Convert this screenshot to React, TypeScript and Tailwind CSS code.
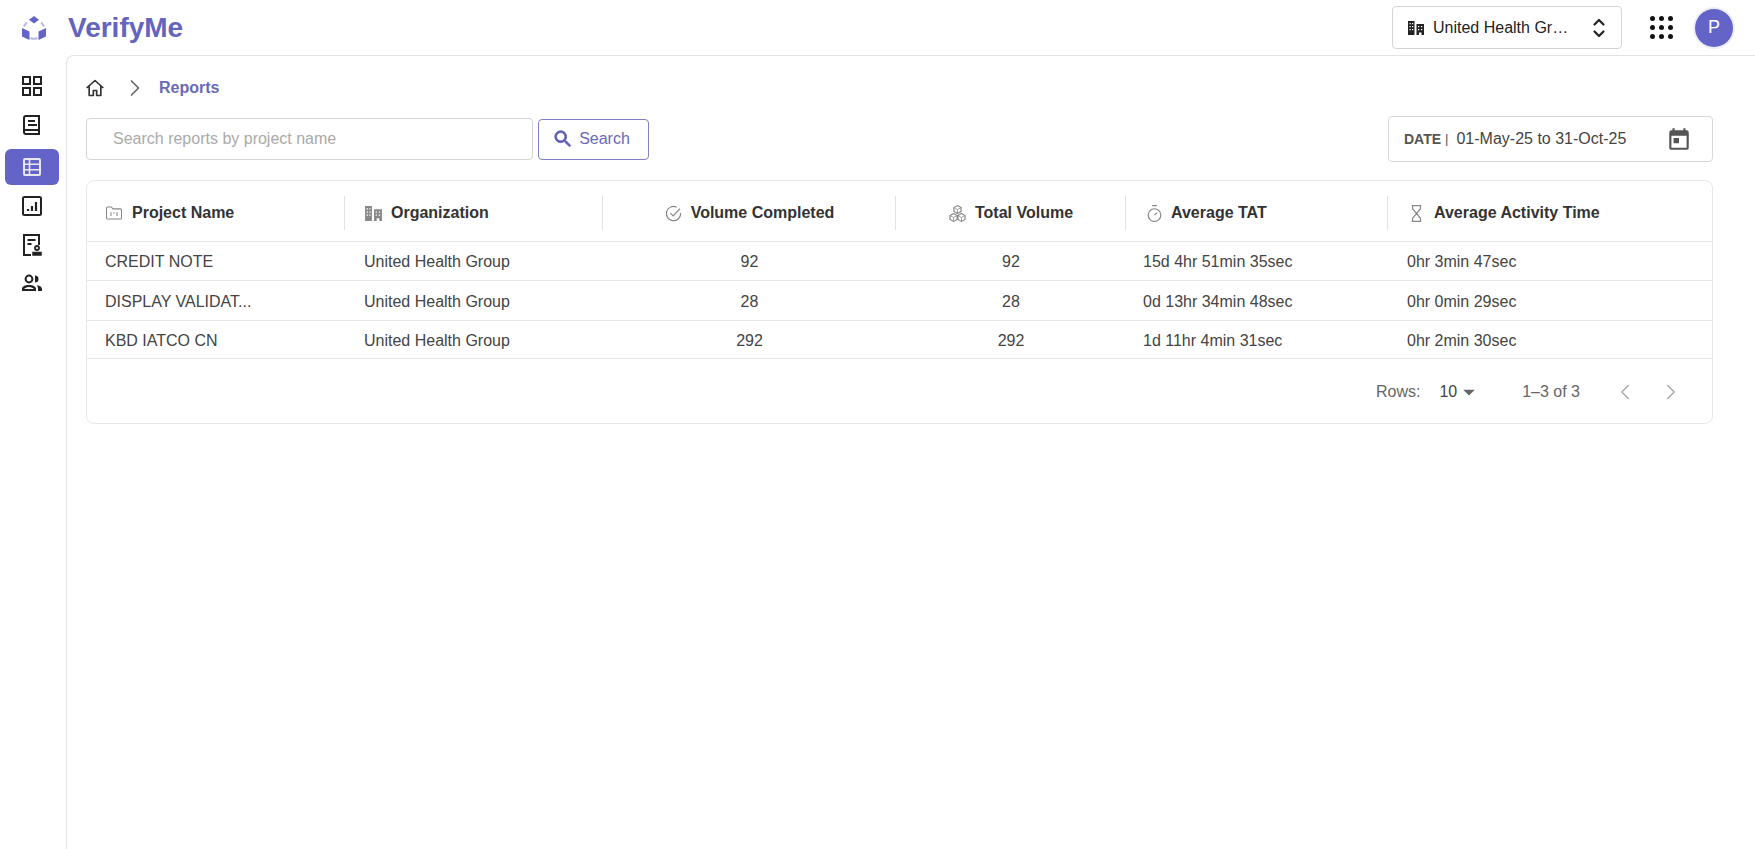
import { ChevronLeft, ChevronRight } from "lucide-react";
import type { ReactNode } from "react";

function Svg({ size = 24, className, children }: { size?: number; className?: string; children: ReactNode }) {
  return (
    <svg width={size} height={size} viewBox="0 0 24 24" fill="none" stroke="currentColor" strokeWidth="2" className={className}>
      {children}
    </svg>
  );
}

function Logo() {
  return (
    <svg width="28" height="28" viewBox="0 0 28 28">
      <path d="M14 2l5 3.700-5 3.800-5-3.800z" fill="#6464c8" />
      <path d="M2 14l7.500 3.500v8.500L2 22.500z" fill="#6464c8" />
      <path d="M26 14l-7.500 3.500v8.500L26 22.500z" fill="#6464c8" />
      <path d="M7 8.500a10 10 0 0 0-3 4M21 8.500a10 10 0 0 1 3 4M10.500 24a8 8 0 0 0 7 0" fill="none" stroke="#b9b9e2" strokeWidth="2" />
    </svg>
  );
}

function BuildingIcon({ size = 18 }: { size?: number }) {
  return (
    <svg width={size} height={size} viewBox="0 0 18 18" fill="currentColor">
      <path d="M1 2h6.500v14H1zM2.500 4v1.200h1.300V4zM5 4v1.200h1.200V4zM2.500 7v1.200h1.300V7zM5 7v1.200h1.200V7zM2.500 10v1.200h1.300V10zM5 10v1.200h1.200V10z" fillRule="evenodd" />
      <path d="M9.500 5H17v11h-2.500v-2.500h-2.500V16H9.500zM11 7v1.200h1.300V7zM14 7v1.200h1.300V7zM11 10v1.200h1.300V10zM14 10v1.200h1.300V10z" fillRule="evenodd" />
    </svg>
  );
}

function UpDownIcon() {
  return (
    <svg width="16" height="24" viewBox="0 0 16 24" fill="none" stroke="currentColor" strokeWidth="2.200" strokeLinecap="round" strokeLinejoin="round">
      <path d="M3.500 8.500L8 4l4.500 4.500M3.500 15.500L8 20l4.500-4.500" />
    </svg>
  );
}

function NavIcon({ name }: { name: string }) {
  if (name === "dashboard") {
    return (
      <Svg>
        <path d="M3 3h7v7H3zM14 3h7v7h-7zM3 14h7v7H3zM14 14h7v7h-7z" />
      </Svg>
    );
  }
  if (name === "book") {
    return (
      <Svg>
        <path d="M6 3h13v18H6a2 2 0 0 1-2-2V5a2 2 0 0 1 2-2z" />
        <path d="M4 17h15M8 8h7M8 12h9" />
      </Svg>
    );
  }
  if (name === "table") {
    return (
      <svg width="24" height="24" viewBox="0 0 24 24" fill="none" stroke="#e8e8fa" strokeWidth="2">
        <rect x="4" y="4" width="16" height="16" rx="1" />
        <path d="M9.500 4v16M4 9.300h16M4 14.700h16" strokeWidth="1.600" />
      </svg>
    );
  }
  if (name === "chart") {
    return (
      <Svg>
        <rect x="3" y="3" width="18" height="18" rx="1.500" />
        <path d="M8 17v-2M12 17v-5M16 17V8" strokeWidth="2.200" />
      </Svg>
    );
  }
  if (name === "certificate") {
    return (
      <Svg>
        <path d="M11 22H4V2h15v10" />
        <path d="M7.500 7h8M7.500 11h4" />
        <circle cx="17" cy="15" r="2" strokeWidth="1.800" />
        <path d="M13 22v-2.500h8V22z" fill="currentColor" strokeWidth="1.500" />
      </Svg>
    );
  }
  return (
    <svg width="24" height="24" viewBox="0 0 24 24" fill="currentColor">
      <circle cx="9" cy="8" r="3.400" fill="none" stroke="currentColor" strokeWidth="2" />
      <path d="M15 4.500a3.500 3.500 0 0 1 0 7z" />
      <path d="M2 20v-2c0-2.500 3-4 7-4s7 1.500 7 4v2zM4.200 18h9.600c-.5-1-2.400-2-4.800-2s-4.300 1-4.800 2z" fillRule="evenodd" />
      <path d="M17 14.200c3 .4 5 1.700 5 3.800v2h-4v-2c0-1.500-.3-2.700-1-3.800z" />
    </svg>
  );
}

function HeaderIcon({ name }: { name: string }) {
  if (name === "building") {
    return <BuildingIcon size={19} />;
  }
  if (name === "folder") {
    return (
      <Svg size={18} className="stroke-[1.400]">
        <path d="M2 5.500a1.500 1.500 0 0 1 1.500-1.500h5l2 2.500h10A1.500 1.500 0 0 1 22 8v10.500a1.500 1.500 0 0 1-1.500 1.500h-17A1.500 1.500 0 0 1 2 18.500z" />
        <path d="M8 11v5M12 11v2M16 11v5" />
      </Svg>
    );
  }
  if (name === "check") {
    return (
      <Svg size={19} className="stroke-[1.500]">
        <path d="M21 11.500V12a9 9 0 1 1-5-8" />
        <path d="M8 11.500l3.500 3.500L20 6" />
      </Svg>
    );
  }
  if (name === "boxes") {
    return (
      <Svg size={19} className="stroke-[1.500]">
        <path d="M12 2l4.500 2.500v5L12 12 7.500 9.500v-5zM7 12l4.500 2.500v5L7 22l-4.500-2.500v-5zM17 12l4.500 2.500v5L17 22l-4.500-2.500v-5z" />
        <path d="M7.500 4.500L12 7l4.500-2.500M12 7v5M2.500 14.500L7 17l4.500-2.500M7 17v5M12.500 14.500L17 17l4.500-2.500M17 17v5" strokeWidth="1" />
      </Svg>
    );
  }
  if (name === "timer") {
    return (
      <Svg size={19} className="stroke-[1.500]">
        <circle cx="12" cy="14" r="8" />
        <path d="M9 2h6M12 14l3-3" />
      </Svg>
    );
  }
  return (
    <Svg size={19} className="stroke-[1.500]">
      <path d="M6 2h12M6 22h12M7 2v4l5 6-5 6v4M17 2v4l-5 6 5 6v4" />
    </Svg>
  );
}

const navItems = ["dashboard", "book", "table", "chart", "certificate", "people"];

const columns = [
  { label: "Project Name", icon: "folder", center: false },
  { label: "Organization", icon: "building", center: false },
  { label: "Volume Completed", icon: "check", center: true },
  { label: "Total Volume", icon: "boxes", center: true },
  { label: "Average TAT", icon: "timer", center: false },
  { label: "Average Activity Time", icon: "hourglass", center: false },
];

const rows = [
  { name: "CREDIT NOTE", done: 92, total: 92, tat: "15d 4hr 51min 35sec", activity: "0hr 3min 47sec", h: "h-[39px]" },
  { name: "DISPLAY VALIDAT...", done: 28, total: 28, tat: "0d 13hr 34min 48sec", activity: "0hr 0min 29sec", h: "h-[40px]" },
  { name: "KBD IATCO CN", done: 292, total: 292, tat: "1d 11hr 4min 31sec", activity: "0hr 2min 30sec", h: "h-[38px]" },
];

const gridCols = "grid grid-cols-[258px_258px_293px_230px_262px_1fr]";

export default function App() {
  return (
    <div className="h-screen overflow-hidden bg-white font-['Liberation_Sans',Arial,sans-serif] text-[#444]">
      <header className="flex h-[55px] items-center pl-[20px] pr-[22px]">
        <Logo />
        <span className="ml-[20px] text-[28px] font-bold text-[#6464c0]">VerifyMe</span>
        <div className="ml-auto flex h-[43px] w-[230px] items-center rounded border border-[#d4d4d4] pl-[14px] pr-[14px] text-[#222]">
          <BuildingIcon />
          <span className="ml-[8px] text-[16px]">United Health Gr…</span>
          <span className="ml-auto flex">
            <UpDownIcon />
          </span>
        </div>
        <div className="ml-[28px] grid grid-cols-3 gap-x-[4px] gap-y-[4px]">
          {Array.from({ length: 9 }).map((_, i) => (
            <span key={i} className="h-[5px] w-[5px] rounded-full bg-[#111]" />
          ))}
        </div>
        <div className="ml-[22px] flex h-[38px] w-[38px] items-center justify-center rounded-full bg-[#6464c8] text-[18px] text-white ring-2 ring-[#eeeef8]">
          P
        </div>
      </header>
      <div className="flex h-[794px]">
        <nav className="flex w-[66px] shrink-0 flex-col items-stretch pl-[5px] pr-[7px] pt-[11px]">
          {navItems.map((name) => (
            <div
              key={name}
              className={
                name === "table"
                  ? "mb-[1px] mt-[4px] flex h-[36px] items-center justify-center rounded-md bg-[#6464c8] text-white"
                  : name === "people"
                    ? "-mt-[2px] flex h-[39.500px] items-center justify-center text-[#222]"
                    : "flex h-[39.500px] items-center justify-center text-[#222]"
              }
            >
              <NavIcon name={name} />
            </div>
          ))}
        </nav>
        <main className="flex-1 rounded-tl-lg border-l border-t border-[#e4e4e4] pl-[19px] pr-[42px]">
          <div className="flex h-[60px] items-center pt-[4px]">
            <svg className="-ml-[1px]" width="20" height="20" viewBox="0 0 24 24" fill="none" stroke="#333" strokeWidth="2" strokeLinejoin="round">
              <path d="M2 12L12 3l10 9M5 10v11h5v-6h4v6h5V10" />
            </svg>
            <ChevronRight size={28} strokeWidth={1.500} className="ml-[16px] text-[#666]" />
            <span className="ml-[10px] text-[16px] font-bold text-[#6a6ab8]">Reports</span>
          </div>
          <div className="flex items-center">
            <div className="flex h-[42px] w-[447px] items-center rounded border border-[#d4d4d4] pl-[26px] text-[16px] text-[#aaa]">
              Search reports by project name
            </div>
            <button className="ml-[5px] flex h-[41px] w-[111px] items-center justify-center gap-[5px] rounded border border-[#8080c4] pr-[5px] text-[16px] text-[#6a6ab8]">
              <svg width="22" height="22" viewBox="0 0 24 24" fill="#5c5cb4" stroke="#5c5cb4" strokeWidth="0.800">
                <path d="M15.500 14h-.79l-.28-.27C15.410 12.590 16 11.110 16 9.500 16 5.910 13.090 3 9.500 3S3 5.910 3 9.500 5.910 16 9.500 16c1.610 0 3.090-.59 4.230-1.570l.27.28v.79l5 4.990L20.490 19l-4.990-5zm-6 0C7.010 14 5 11.990 5 9.500S7.010 5 9.500 5 14 7.010 14 9.500 11.990 14 9.500 14z" />
              </svg>
              Search
            </button>
            <div className="ml-auto flex h-[46px] w-[325px] items-center rounded border border-[#d8d8d8] pl-[15px] pr-[20px]">
              <span className="text-[14px] font-bold text-[#555]">DATE</span>
              <span className="ml-[4px] text-[13px] text-[#555]">|</span>
              <span className="ml-[8px] text-[16px]">01-May-25 to 31-Oct-25</span>
              <svg className="ml-auto" width="26" height="26" viewBox="0 0 24 24" fill="#555">
                <path d="M19 4h-1V2h-2v2H8V2H6v2H5a2 2 0 0 0-2 2v14a2 2 0 0 0 2 2h14a2 2 0 0 0 2-2V6a2 2 0 0 0-2-2zm0 16H5V9h14zM7 11h5v5H7z" fillRule="evenodd" />
              </svg>
            </div>
          </div>
          <div className="mt-[18px] h-[244px] rounded-lg border border-[#e8e8e8]">
            <div className={`${gridCols} h-[61px] border-b border-[#e8e8e8] pt-[4px]`}>
              {columns.map((col, i) => (
                <div key={col.label} className="flex items-center">
                  <div
                    className={
                      col.center
                        ? "flex flex-1 items-center justify-center gap-[8px]"
                        : i === 0
                          ? "flex flex-1 items-center gap-[9px] pl-[18px]"
                          : i === 4
                            ? "flex flex-1 items-center gap-[7px] pl-[19px]"
                            : "flex flex-1 items-center gap-[8px] pl-[19px]"
                    }
                  >
                    <span className="flex text-[#888]">
                      <HeaderIcon name={col.icon} />
                    </span>
                    <span className="text-[16px] font-bold text-[#333]">{col.label}</span>
                  </div>
                  {i < columns.length - 1 && <span className="h-[34px] w-px bg-[#e2e2e2]" />}
                </div>
              ))}
            </div>
            {rows.map((row) => (
              <div key={row.name} className={`${gridCols} ${row.h} items-center border-b border-[#e8e8e8] pt-[2px] text-[16px]`}>
                <div className="pl-[18px]">{row.name}</div>
                <div className="pl-[19px]">United Health Group</div>
                <div className="text-center">{row.done}</div>
                <div className="text-center">{row.total}</div>
                <div className="pl-[17px]">{row.tat}</div>
                <div className="pl-[19px]">{row.activity}</div>
              </div>
            ))}
            <div className="flex h-[64px] items-center pr-[28px] pt-[2px] text-[16px] text-[#666]">
              <span className="ml-auto">Rows:</span>
              <span className="ml-[19px] text-[#444]">10</span>
              <svg className="ml-[5px]" width="14" height="14" viewBox="0 0 12 12" fill="#666">
                <path d="M1 4h10L6 9z" />
              </svg>
              <span className="ml-[46px]">1–3 of 3</span>
              <ChevronLeft size={26} strokeWidth={1.500} className="ml-[32px] text-[#aaa]" />
              <ChevronRight size={26} strokeWidth={1.500} className="ml-[20px] text-[#aaa]" />
            </div>
          </div>
        </main>
      </div>
    </div>
  );
}
